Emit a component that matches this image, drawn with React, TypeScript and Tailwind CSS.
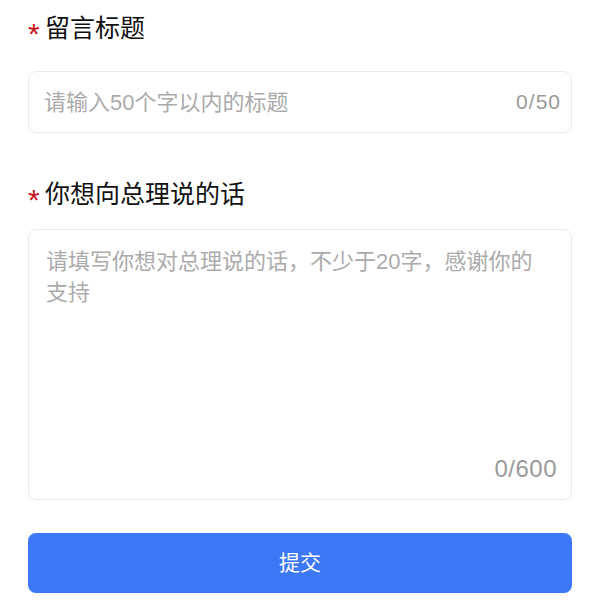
import { useState } from 'react';

const font = { fontFamily: '"Liberation Sans", "Noto Sans CJK SC", sans-serif' };

function Label({ text }: { text: string }) {
  return (
    <div className="flex h-[36px] items-center">
      <span className="w-[17px] translate-y-[6px] text-[30px] leading-none text-[#c8161d]">*</span>
      <span className="text-[25px] leading-[36px] text-[#111]">{text}</span>
    </div>
  );
}

export default function App() {
  const [title, setTitle] = useState('');
  const [content, setContent] = useState('');

  return (
    <div className="min-h-screen bg-white px-[28px] pt-[10px]" style={font}>
      <Label text="留言标题" />
      <div className="mt-[25px] flex h-[62px] items-center rounded-[8px] border border-[#ebebeb] pl-[15px] pr-[10px]">
        <input
          value={title}
          maxLength={50}
          onChange={(e) => setTitle(e.target.value)}
          placeholder="请输入50个字以内的标题"
          className="min-w-0 flex-1 bg-transparent text-[22px] text-[#333] outline-none placeholder:text-[#ababab]"
        />
        <span className="text-[21px] tracking-[1px] text-[#9a9a9a]">{title.length}/50</span>
      </div>

      <div className="mt-[43px]">
        <Label text="你想向总理说的话" />
      </div>
      <div className="mt-[17px] flex h-[271px] flex-col rounded-[8px] border border-[#ebebeb] pb-[16px] pl-[17px] pr-[14px] pt-[16px]">
        <textarea
          value={content}
          maxLength={600}
          onChange={(e) => setContent(e.target.value)}
          placeholder="请填写你想对总理说的话，不少于20字，感谢你的支持"
          className="mr-[16px] min-h-0 flex-1 resize-none bg-transparent text-[22px] leading-[31px] text-[#333] outline-none placeholder:text-[#ababab]"
        />
        <div className="text-right text-[24px] leading-[28px] tracking-[0.5px] text-[#9a9a9a]">{content.length}/600</div>
      </div>

      <button className="mt-[33px] h-[60px] w-full rounded-[8px] bg-[#3c78f6] text-[21px] text-white">
        提交
      </button>
    </div>
  );
}
